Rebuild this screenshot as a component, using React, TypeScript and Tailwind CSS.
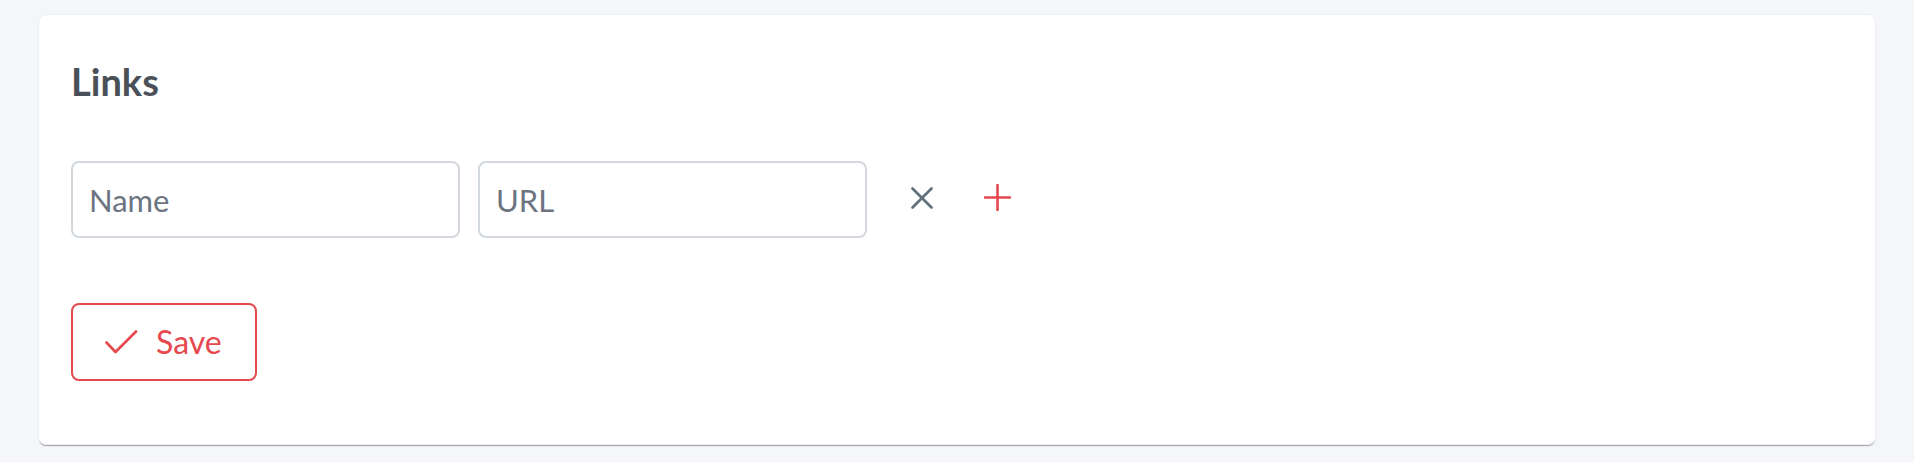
import React from "react";

export default function App() {
  return (
    <div className="flex min-h-[462px] w-full flex-col bg-[#f4f6f9] font-['Lato',sans-serif]">
      <div className="ml-[38px] mr-[38px] mt-[14px] rounded-[8px] border border-[#eceff3] bg-white pl-[32px] pr-[32px] pt-[43px] pb-[63px] shadow-[0_2px_1px_-1px_rgba(0,0,0,0.35)]">
        <h2 className="text-[38px] font-bold leading-[46px] text-[#4a5058]">Links</h2>
        <div className="mt-[57px] flex items-center">
          <input
            placeholder="Name"
            className="h-[77px] w-[389px] rounded-[8px] border-2 border-[#d3d8de] bg-white px-[16px] text-[31px] text-[#4a5058] placeholder:text-[#6b7480] outline-none"
          />
          <input
            placeholder="URL"
            className="ml-[18px] h-[77px] w-[389px] rounded-[8px] border-2 border-[#d3d8de] bg-white px-[16px] text-[31px] text-[#4a5058] placeholder:text-[#6b7480] outline-none"
          />
          <button className="ml-[44px] -mt-[4px] flex h-[22px] w-[22px] items-center justify-center">
            <svg width="22" height="22" viewBox="0 0 22 22" fill="none" stroke="#5f707d" strokeWidth="2.6" strokeLinecap="round">
              <path d="M1.5 1.5 L20.5 20.5" />
              <path d="M20.5 1.5 L1.5 20.5" />
            </svg>
          </button>
          <button className="ml-[51px] -mt-[4px] flex h-[27px] w-[27px] items-center justify-center">
            <svg width="27" height="27" viewBox="0 0 27 27" fill="none" stroke="#e5484d" strokeWidth="2.6" strokeLinecap="round">
              <path d="M13.5 1 L13.5 26" />
              <path d="M1 13.5 L26 13.5" />
            </svg>
          </button>
        </div>
        <button className="mt-[65px] flex h-[78px] w-[186px] items-center rounded-[8px] border-2 border-[#e5484d] bg-white pl-[32px] text-[32px] text-[#e5484d]">
          <svg width="33" height="24" viewBox="0 0 33 24" fill="none" stroke="#e5484d" strokeWidth="2.6" strokeLinecap="round" strokeLinejoin="round">
            <path d="M1.5 12.5 L10.5 22 L31 1.5" />
          </svg>
          <span className="ml-[18px] leading-none">Save</span>
        </button>
      </div>
    </div>
  );
}
